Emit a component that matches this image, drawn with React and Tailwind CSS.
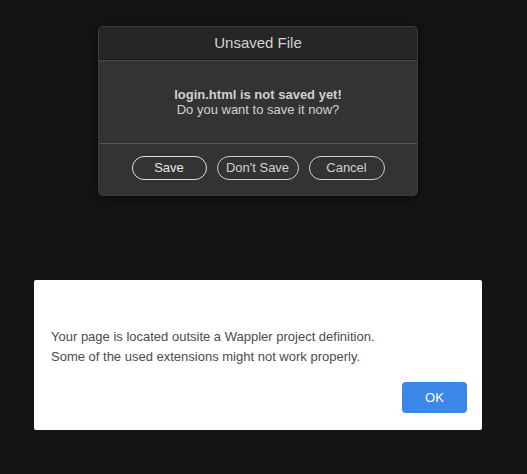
import React from 'react';

const UnsavedDialog = () => {
  return (
    <div className="ml-[98px] w-[320px] rounded-[5px] overflow-hidden bg-[#333333] shadow-[0_2px_8px_rgba(0,0,0,0.6)] border border-[#3d3d3d]">
      <div className="h-[33px] flex items-center justify-center bg-[#262626] border-b border-[#1a1a1a] text-[15px] text-[#d2d2d2]">
        Unsaved File
      </div>
      <div className="border-t border-[#4a4a4a] h-[83px] flex flex-col items-center justify-center text-[13px] leading-[15px] text-[#d0d0d0]">
        <div className="font-bold">login.html is not saved yet!</div>
        <div>Do you want to save it now?</div>
      </div>
      <div className="border-t border-[#555555] flex justify-center gap-[10px] pt-[12px] pb-[15px]">
        <button className="w-[75px] h-[24px] rounded-full border border-[#e0e0e0] text-[13px] text-[#e6e6e6]">Save</button>
        <button className="w-[82px] h-[24px] rounded-full border border-[#cfcfcf] text-[13px] text-[#d0d0d0]">Don't Save</button>
        <button className="w-[76px] h-[24px] rounded-full border border-[#cfcfcf] text-[13px] text-[#d0d0d0]">Cancel</button>
      </div>
    </div>
  );
};

const ProjectAlert = () => {
  return (
    <div className="ml-[34px] w-[448px] h-[150px] bg-white rounded-[2px] pt-[47px] pl-[17px] pr-[15px] flex flex-col">
      <p className="text-[13px] leading-[20px] text-[#4b4b4b]">
        Your page is located outsite a Wappler project definition.
        <br />
        Some of the used extensions might not work properly.
      </p>
      <div className="flex justify-end mt-[15px]">
        <button className="w-[65px] h-[31px] rounded-[4px] bg-[#3b87e8] text-white text-[13px]">OK</button>
      </div>
    </div>
  );
};

export default function App() {
  return (
    <div className="w-[527px] h-[474px] bg-[#141414] pt-[26px] font-['Liberation_Sans',Arial,sans-serif]">
      <UnsavedDialog />
      <div className="h-[84px]" />
      <ProjectAlert />
    </div>
  );
}
